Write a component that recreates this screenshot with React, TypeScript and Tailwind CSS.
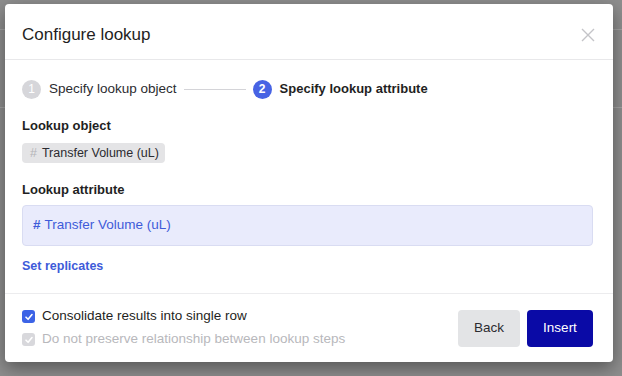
import React from "react";

const font = { fontFamily: '"Liberation Sans", Arial, sans-serif' };

const StepCircle: React.FC<{ n: number; active?: boolean }> = ({ n, active }) => (
  <span
    className={
      active
        ? "flex h-[19px] w-[19px] items-center justify-center rounded-full bg-[#4763e4] text-[12px] font-bold text-white"
        : "flex h-[19px] w-[19px] items-center justify-center rounded-full bg-[#d6d6da] text-[12px] text-white"
    }
  >
    {n}
  </span>
);

const Check: React.FC<{ disabled?: boolean }> = ({ disabled }) => (
  <span
    className={
      disabled
        ? "flex h-[13px] w-[13px] items-center justify-center rounded-[3px] bg-[#d8d8dc]"
        : "flex h-[13px] w-[13px] items-center justify-center rounded-[3px] bg-[#3c63e6]"
    }
  >
    <svg width="10" height="10" viewBox="0 0 10 10" fill="none">
      <path d="M2 5.2 L4.1 7.3 L8 2.6" stroke="white" strokeWidth="1.6" strokeLinecap="round" strokeLinejoin="round" />
    </svg>
  </span>
);

const App: React.FC = () => {
  return (
    <div className="relative h-[376px] w-[622px] overflow-hidden bg-[#8e8e8e]" style={font}>
      <div className="h-[30px] border-b border-[#a3a3a3]" />
      <div className="h-[78px] border-b border-[#a3a3a3]" />

      <div className="absolute left-[5px] top-[4px] flex h-[358px] w-[608px] flex-col rounded-[4px] bg-white shadow-[0_6px_18px_rgba(0,0,0,0.4)]">
        <div className="flex h-[56px] items-center justify-between border-b border-[#e8e8ea] pl-[17px] pr-[18px] pt-[6px]">
          <span className="text-[17px] font-medium text-[#1f1f23]">Configure lookup</span>
          <svg width="14" height="14" viewBox="0 0 14 14" stroke="#c4c4c8" strokeWidth="1.4">
            <path d="M1 1 L13 13 M13 1 L1 13" />
          </svg>
        </div>

        <div className="flex flex-1 flex-col pl-[17px] pr-[20px] pt-[19px]">
          <div className="flex h-[20px] items-center">
            <StepCircle n={1} />
            <span className="ml-[8px] text-[13.5px] text-[#2b2b30]">Specify lookup object</span>
            <span className="mx-[7px] h-px w-[62px] bg-[#d4d4d8]" />
            <StepCircle n={2} active />
            <span className="ml-[8px] text-[13px] font-bold text-[#1f1f23]">Specify lookup attribute</span>
          </div>

          <div className="mt-[18px] text-[13px] font-bold leading-[18px] text-[#1f1f23]">Lookup object</div>
          <div className="mt-[8px] flex h-[20px] w-fit items-center gap-[5px] rounded-[4px] bg-[#e4e4e6] pl-[8px] pr-[6px] text-[12.5px] text-[#2b2b30]">
            <span className="text-[#b4b4b8]">#</span>
            <span>Transfer Volume (uL)</span>
          </div>

          <div className="mt-[18px] text-[13px] font-bold leading-[18px] text-[#1f1f23]">Lookup attribute</div>
          <div className="mt-[6px] flex h-[41px] items-center gap-[4px] rounded-[4px] border border-[#d9dcf2] bg-[#e9ebfc] px-[10px] text-[13.5px] text-[#3e5bd9]">
            <span className="font-bold">#</span>
            <span>Transfer Volume (uL)</span>
          </div>

          <div className="mt-[11px] text-[12.5px] font-bold leading-[18px] text-[#3e5bd9]">Set replicates</div>
        </div>

        <div className="flex h-[69px] items-center justify-between border-t border-[#ececee] pl-[17px] pr-[20px]">
          <div className="flex flex-col gap-[5px]">
            <label className="flex h-[18px] items-center gap-[7px] text-[13.5px] text-[#1f1f23]">
              <Check />
              Consolidate results into single row
            </label>
            <label className="flex h-[18px] items-center gap-[7px] text-[13.5px] text-[#b8b8bc]">
              <Check disabled />
              Do not preserve relationship between lookup steps
            </label>
          </div>
          <div className="flex gap-[7px]">
            <button className="h-[37px] w-[62px] rounded-[4px] bg-[#e3e4e6] text-[13.5px] text-[#2b2b30]">Back</button>
            <button className="h-[37px] w-[66px] rounded-[4px] bg-[#0a0aa6] text-[13.5px] text-white">Insert</button>
          </div>
        </div>
      </div>
    </div>
  );
};

export default App;
